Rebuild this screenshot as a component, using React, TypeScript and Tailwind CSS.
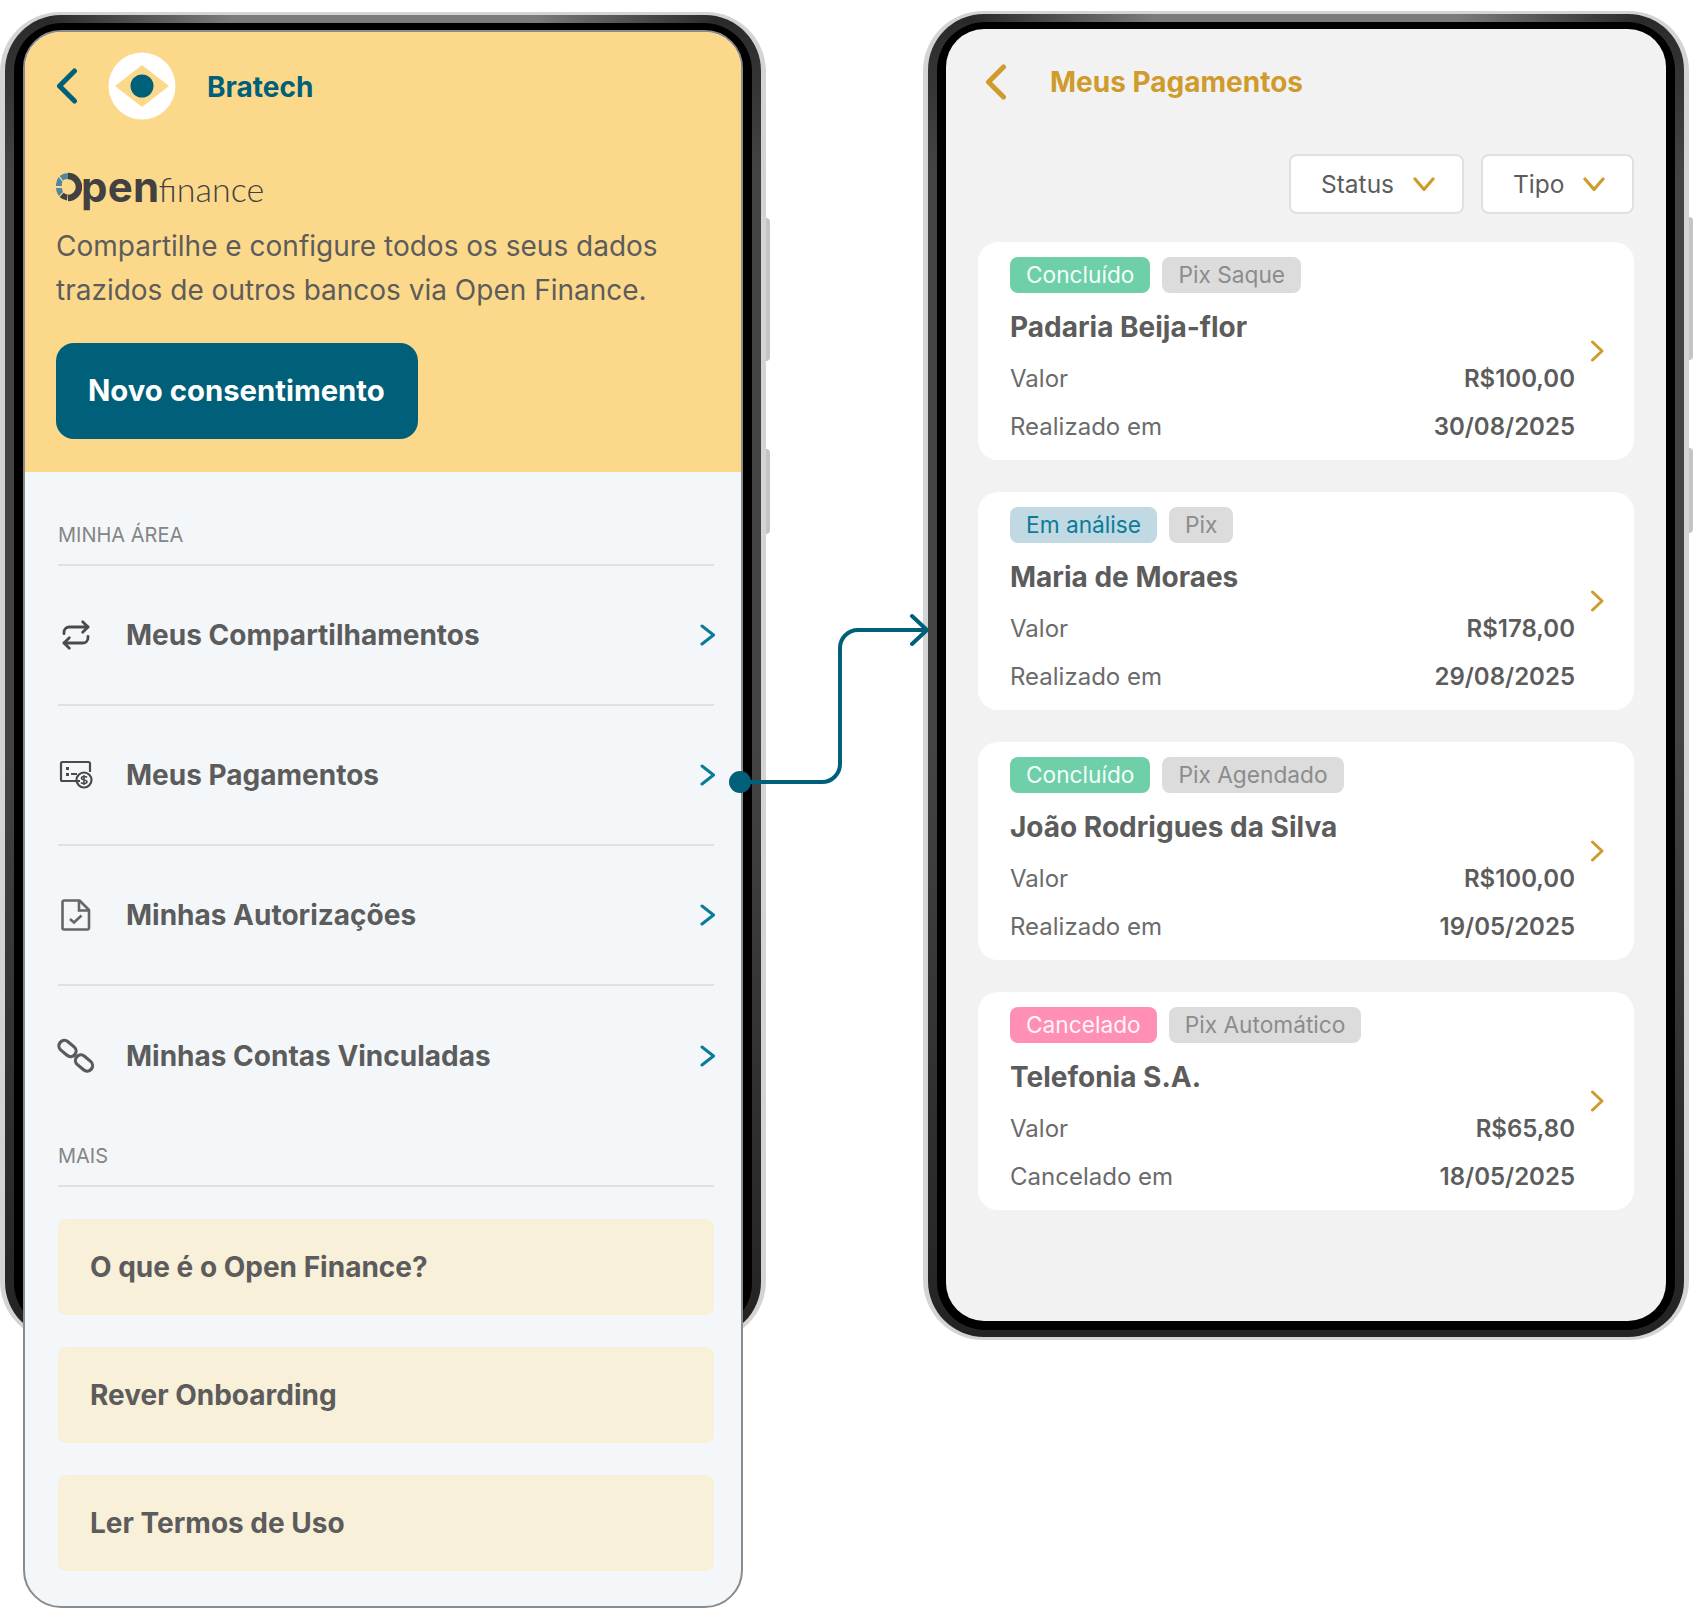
// App: duas telas de celular (Open Finance e Meus Pagamentos) ligadas por um conector

import React from 'react';
import { Repeat } from 'lucide-react';

const FONT = "font-['Inter','Liberation_Sans',sans-serif]";

const PhoneFrame: React.FC<{ className?: string; children: React.ReactNode }> = ({ className, children }) => (
    <div className={`relative w-[766px] h-[1329px] shrink-0 rounded-[60px] bg-[#d4d4d4] pt-[3px] pb-[3px] px-[5px] ${className ?? ''}`}>
        <div className="absolute -right-[4px] top-[206px] w-[4px] h-[143px] rounded-r-sm bg-[#c4c4c4]" />
        <div className="absolute -right-[4px] top-[437px] w-[4px] h-[85px] rounded-r-sm bg-[#c4c4c4]" />
        <div className="h-full rounded-[56px] [background:linear-gradient(90deg,#2a2a2a_6%,#7c7c7c_30%,#7c7c7c_70%,#2a2a2a_94%)_top/100%_10px_no-repeat,linear-gradient(180deg,#2a2a2a_0,#444444_12%,#444444_55%,#232323_100%)] pt-[8px] pb-[7px] px-[9px]">
            <div className="h-full rounded-[48px] bg-black pt-[7px] pb-[8px] px-[9px]">{children}</div>
        </div>
    </div>
);

const BackArrow: React.FC<{ color: string; className?: string }> = ({ color, className }) => (
    <svg width="22" height="36" viewBox="0 0 22 36" fill="none" className={`shrink-0 ${className ?? ''}`}>
        <path d="M18.500 3L3.500 18L18.500 33" stroke={color} strokeWidth="5" strokeLinecap="round" strokeLinejoin="round" />
    </svg>
);

const RowArrow: React.FC<{ color: string; className?: string }> = ({ color, className }) => (
    <svg width="16" height="22" viewBox="0 0 16 22" fill="none" className={`shrink-0 ${className ?? ''}`}>
        <path d="M2 2L13.500 11L2 20" stroke={color} strokeWidth="3" strokeLinecap="round" strokeLinejoin="round" />
    </svg>
);

const CardArrow = () => (
    <svg width="15" height="22" viewBox="0 0 15 22" fill="none" className="shrink-0 ml-[15px] -mt-[15px]">
        <path d="M2.500 2L12 11L2.500 20" stroke="#cf9b2c" strokeWidth="3" strokeLinecap="round" strokeLinejoin="round" />
    </svg>
);

const DownArrow: React.FC<{ className?: string }> = ({ className }) => (
    <svg width="22" height="15" viewBox="0 0 22 15" fill="none" className={`shrink-0 ${className ?? ''}`}>
        <path d="M2 2L11 12.500L20 2" stroke="#cf9b2c" strokeWidth="3.200" strokeLinecap="round" strokeLinejoin="round" />
    </svg>
);

const LogoMark = () => (
    <svg width="68" height="68" viewBox="0 0 68 68" className="shrink-0">
        <circle cx="34" cy="34" r="33.500" fill="#ffffff" />
        <path d="M34 13 L61 34 L34 55 L7 34 Z" fill="#fcd98a" />
        <circle cx="34" cy="34" r="11.500" fill="#005f79" />
    </svg>
);

const OpenRing = () => (
    <svg width="26" height="30" viewBox="0 0 26 30" className="shrink-0">
        <path d="M12 4 A11 11 0 1 1 12 26" fill="none" stroke="#414141" strokeWidth="6.500" />
        <path d="M12 1 A14 14 0 0 0 3.600 4 L7 8.400 A8 8 0 0 1 12 7 Z" fill="#4d87a5" />
        <path d="M2.600 5 A14 14 0 0 0 0 14 L6 14 A8 8 0 0 1 6.400 9.400 Z" fill="#4d87a5" />
        <path d="M0 16 A14 14 0 0 0 2.800 24 L7 20 A8 8 0 0 1 6 16 Z" fill="#4d87a5" />
        <path d="M3.600 25 A14 14 0 0 0 11 28.600 L11.600 22.600 A8 8 0 0 1 7.600 20.800 Z" fill="#414141" />
    </svg>
);

const MoneyIcon = () => (
    <svg width="34" height="30" viewBox="0 0 34 30" fill="none" className="shrink-0">
        <path d="M21 21H3.500A1.500 1.500 0 0 1 2 19.500V3.500A1.500 1.500 0 0 1 3.500 2H29.500A1.500 1.500 0 0 1 31 3.500V12" stroke="#4a4a4a" strokeWidth="2.200" />
        <rect x="7" y="7" width="3" height="3" fill="#4a4a4a" />
        <rect x="7" y="13" width="3" height="3" fill="#4a4a4a" />
        <rect x="12" y="13" width="6" height="2" fill="#4a4a4a" />
        <circle cx="25" cy="20" r="7.500" stroke="#4a4a4a" strokeWidth="2.200" />
        <path d="M28 17.500C27 16 22.500 16 22.500 18.300C22.500 20.600 28 19.400 28 21.800C28 24 23 24 22 22.500M25 15V25" stroke="#4a4a4a" strokeWidth="1.600" />
    </svg>
);

const FileIcon = () => (
    <svg width="30" height="32" viewBox="0 0 30 32" fill="none" className="shrink-0">
        <path d="M3 1.500H18.500L28 11V29A1.500 1.500 0 0 1 26.500 30.500H3A1.500 1.500 0 0 1 1.500 29V3A1.500 1.500 0 0 1 3 1.500Z" stroke="#666666" strokeWidth="2.600" strokeLinejoin="round" />
        <path d="M18 2V11.500H27.500" stroke="#666666" strokeWidth="2.600" />
        <path d="M9 20L13 23.500L20.500 16.500" stroke="#666666" strokeWidth="2.600" />
    </svg>
);

const ChainIcon = () => (
    <svg width="38" height="36" viewBox="0 0 38 36" fill="none" className="shrink-0">
        <rect x="1" y="5" width="19" height="11" rx="5.500" transform="rotate(40 10.500 10.500)" stroke="#5a5a5a" strokeWidth="3.200" />
        <rect x="17.500" y="19.500" width="19" height="11" rx="5.500" transform="rotate(40 27 25)" stroke="#5a5a5a" strokeWidth="3.200" />
    </svg>
);

const Connector = () => (
    <svg width="200" height="190" viewBox="0 0 200 190" fill="none" className="absolute z-20 left-[728px] top-[605px]">
        <circle cx="12" cy="177" r="11" fill="#005f79" />
        <path d="M12 177H94A18 18 0 0 0 112 159V43A18 18 0 0 1 130 25H199" stroke="#005f79" strokeWidth="4" />
        <path d="M184 11L199 25L184 39" stroke="#005f79" strokeWidth="4" strokeLinecap="round" strokeLinejoin="round" />
    </svg>
);

const SectionLabel: React.FC<{ text: string; className?: string }> = ({ text, className }) => (
    <div className={`text-[20px] leading-[24px] text-[#858585] pb-[17px] border-b-2 border-[#e1e1e3] ${className ?? ''}`}>{text}</div>
);

const menuItems = [
    { label: 'Meus Compartilhamentos', icon: <Repeat size={32} color="#4a4a4a" strokeWidth={2.100} /> },
    { label: 'Meus Pagamentos', icon: <MoneyIcon /> },
    { label: 'Minhas Autorizações', icon: <FileIcon /> },
    { label: 'Minhas Contas Vinculadas', icon: <ChainIcon /> },
];

const moreItems = ['O que é o Open Finance?', 'Rever Onboarding', 'Ler Termos de Uso'];

const OpenFinanceScreen = () => (
    <div className="h-[1578px] rounded-[38px] border-2 border-[#8b8b8b] bg-[#f4f7f9] overflow-hidden relative z-10">
        <div className="h-[440px] bg-[#fcd98a] pl-[31px] pt-[20px]">
            <div className="flex items-center">
                <BackArrow color="#005f79" />
                <div className="ml-[30px] mr-[31px]"><LogoMark /></div>
                <span className="text-[28px] font-bold text-[#005f79] mt-[1px]">Bratech</span>
            </div>
            <div className="mt-[50px] flex items-center h-[34px] text-[#414141]">
                <OpenRing />
                <div className="flex items-baseline">
                    <span className="-ml-[1px] text-[42px] leading-none font-bold tracking-[0.300px]">pen</span>
                    <span className="-ml-[1px] text-[34px] leading-none font-light font-['Lato',sans-serif]">finance</span>
                </div>
            </div>
            <p className="mt-[20px] text-[28px] leading-[44px] text-[#5c5c5c]">
                Compartilhe e configure todos os seus dados
                <br />
                trazidos de outros bancos via Open Finance.
            </p>
            <button className="mt-[31px] w-[362px] h-[96px] rounded-[18px] bg-[#005f79] text-[29.300px] font-bold text-white pl-[32px] text-left">
                Novo consentimento
            </button>
        </div>
        <div className="pl-[33px] pr-[27px] pt-[51px]">
            <SectionLabel text="MINHA ÁREA" />
            {menuItems.map((item, i) => (
                <div key={item.label} className={`h-[140px] flex items-center ${i < 3 ? 'border-b-2 border-[#e1e1e3]' : ''}`}>
                    <div className="w-[68px] shrink-0 flex justify-center pr-[32px]">{item.icon}</div>
                    <span className="flex-1 text-[28px] font-bold text-[#5c5c5c]">{item.label}</span>
                    <RowArrow color="#0a7c99" className="-mr-[2px]" />
                </div>
            ))}
            <SectionLabel text="MAIS" className="mt-[18px]" />
            <div className="mt-[32px] flex flex-col gap-[32px]">
                {moreItems.map(text => (
                    <div key={text} className="h-[96px] rounded-lg bg-[#f8f0d9] flex items-center pl-[32px] text-[28px] font-bold text-[#5c5c5c]">
                        {text}
                    </div>
                ))}
            </div>
        </div>
    </div>
);

const Filter: React.FC<{ label: string; width: string; gap: string }> = ({ label, width, gap }) => (
    <div className={`${width} h-[60px] rounded-lg border-2 border-[#e0e0e0] bg-white flex items-center pl-[30px] text-[24.500px] text-[#5c5c5c]`}>
        <span>{label}</span>
        <DownArrow className={gap} />
    </div>
);

const payments = [
    { status: 'Concluído', statusClass: 'bg-[#6fcfa8] text-[#f1fff9]', kind: 'Pix Saque', name: 'Padaria Beija-flor', value: 'R$100,00', dateLabel: 'Realizado em', date: '30/08/2025' },
    { status: 'Em análise', statusClass: 'bg-[#c0d9e3] text-[#0b7c9a]', kind: 'Pix', name: 'Maria de Moraes', value: 'R$178,00', dateLabel: 'Realizado em', date: '29/08/2025' },
    { status: 'Concluído', statusClass: 'bg-[#6fcfa8] text-[#f1fff9]', kind: 'Pix Agendado', name: 'João Rodrigues da Silva', value: 'R$100,00', dateLabel: 'Realizado em', date: '19/05/2025' },
    { status: 'Cancelado', statusClass: 'bg-[#ff8fb4] text-[#fff4f8]', kind: 'Pix Automático', name: 'Telefonia S.A.', value: 'R$65,80', dateLabel: 'Cancelado em', date: '18/05/2025' },
];

const PaymentsScreen = () => (
    <div className="h-[1292px] rounded-[38px] bg-[#f2f2f2] pl-[32px] pr-[32px] overflow-hidden">
        <div className="flex items-center h-[104px] pt-[1px]">
            <BackArrow color="#cf9b2c" className="ml-[7px]" />
            <span className="ml-[43px] text-[28px] font-bold text-[#cf9b2c]">Meus Pagamentos</span>
        </div>
        <div className="mt-[21px] flex justify-end gap-[17px]">
            <Filter label="Status" width="w-[175px]" gap="ml-[19px]" />
            <Filter label="Tipo" width="w-[153px]" gap="ml-[19px]" />
        </div>
        <div className="mt-[28px] flex flex-col gap-[32px]">
            {payments.map(p => (
                <div key={p.name} className="h-[218px] rounded-[20px] bg-white pl-[32px] pr-[29px] pt-[15px] flex items-center">
                    <div className="flex-1 self-start">
                        <div className="flex gap-[12px]">
                            <span className={`h-[36px] px-[16px] rounded-lg text-[22.700px] leading-[36px] ${p.statusClass}`}>{p.status}</span>
                            <span className="h-[36px] px-[16px] rounded-lg bg-[#dcdcdc] text-[22.700px] leading-[36px] text-[#8c8c8c]">{p.kind}</span>
                        </div>
                        <div className="mt-[17px] text-[28px] leading-[34px] font-bold text-[#5c5c5c]">{p.name}</div>
                        <div className="mt-[19px] flex justify-between text-[24px] leading-[32px] text-[#6b6b6b]">
                            <span>Valor</span>
                            <span className="font-semibold text-[#5c5c5c]">{p.value}</span>
                        </div>
                        <div className="mt-[16px] flex justify-between text-[24px] leading-[32px] text-[#6b6b6b]">
                            <span>{p.dateLabel}</span>
                            <span className="font-semibold text-[#5c5c5c]">{p.date}</span>
                        </div>
                    </div>
                    <CardArrow />
                </div>
            ))}
        </div>
    </div>
);

export default function App() {
    return (
        <div className={`relative w-[1694px] h-[1610px] bg-white overflow-hidden flex items-start pt-[11px] ${FONT}`}>
            <PhoneFrame className="mt-[1px]">
                <OpenFinanceScreen />
            </PhoneFrame>
            <PhoneFrame className="ml-[157px]">
                <PaymentsScreen />
            </PhoneFrame>
            <Connector />
        </div>
    );
}
